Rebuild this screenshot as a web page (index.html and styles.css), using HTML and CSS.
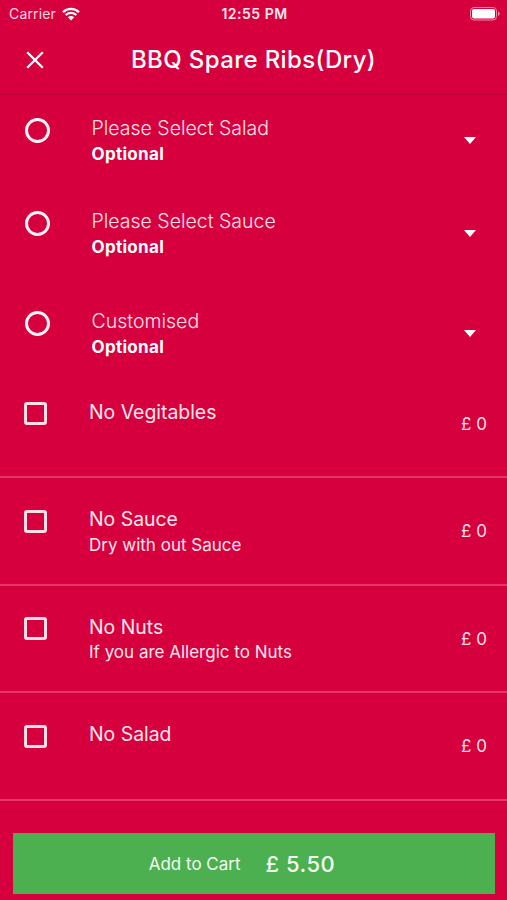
FILE: index.html
```html
<!DOCTYPE html>
<html lang="en">
<head>
  <meta charset="UTF-8">
  <meta name="viewport" content="width=device-width, initial-scale=1.0">
  <title>BBQ Spare Ribs(Dry)</title>
  <link rel="stylesheet" href="styles.css">
</head>
<body>

  <div class="status-bar">
    <div class="carrier">
      <span>Carrier</span>
      <svg class="wifi" viewBox="0 0 18 14">
        <path d="M1 5.2 A11.4 11.4 0 0 1 17 5.2" />
        <path d="M3.7 8 A7.5 7.5 0 0 1 14.3 8" />
        <path class="dot" d="M9 13.6 L5.8 10.3 A4.6 4.6 0 0 1 12.2 10.3 Z" />
      </svg>
    </div>
    <span class="time">12:55 PM</span>
    <div class="battery-wrap">
      <svg class="battery" viewBox="0 0 30 14">
        <rect class="case" x="0.5" y="0.5" width="26" height="12.5" rx="3.5" />
        <rect class="level" x="2" y="2" width="23" height="9.5" rx="2" />
        <path class="tip" d="M28 4.5 Q29.8 5.2 29.8 6.8 Q29.8 8.4 28 9 Z" />
      </svg>
    </div>
  </div>

  <header class="header">
    <svg class="close" viewBox="0 0 18 18">
      <path d="M1.2 1.2 L16.8 16.8 M16.8 1.2 L1.2 16.8" />
    </svg>
    <h1>BBQ Spare Ribs(Dry)</h1>
  </header>

  <main>
    <section class="group">
      <span class="radio"></span>
      <div class="text">
        <p class="group-title">Please Select Salad</p>
        <p class="optional">Optional</p>
      </div>
      <span class="arrow"></span>
    </section>
    <section class="group">
      <span class="radio"></span>
      <div class="text">
        <p class="group-title">Please Select Sauce</p>
        <p class="optional">Optional</p>
      </div>
      <span class="arrow"></span>
    </section>
    <section class="group open">
      <span class="radio"></span>
      <div class="text">
        <p class="group-title">Customised</p>
        <p class="optional">Optional</p>
      </div>
      <span class="arrow"></span>
    </section>

    <ul class="items">
      <li class="item">
        <span class="checkbox"></span>
        <div class="text">
          <p class="item-title">No Vegitables</p>
        </div>
        <span class="price">£ 0</span>
      </li>
      <li class="item">
        <span class="checkbox"></span>
        <div class="text">
          <p class="item-title">No Sauce</p>
          <p class="item-note">Dry with out Sauce</p>
        </div>
        <span class="price">£ 0</span>
      </li>
      <li class="item">
        <span class="checkbox"></span>
        <div class="text">
          <p class="item-title">No Nuts</p>
          <p class="item-note">If you are Allergic to Nuts</p>
        </div>
        <span class="price">£ 0</span>
      </li>
      <li class="item">
        <span class="checkbox"></span>
        <div class="text">
          <p class="item-title">No Salad</p>
        </div>
        <span class="price">£ 0</span>
      </li>
    </ul>
  </main>

  <button class="cart">
    <span class="cart-label">Add to Cart</span>
    <span class="cart-total">£ 5.50</span>
  </button>

</body>
</html>
```
FILE: styles.css
```css
* {
  box-sizing: border-box;
}
body {
  margin: 0;
  height: 900px;
  overflow: hidden;
  font-family: Inter, Roboto, sans-serif;
  background-color: #d7003f;
  color: #fff;
}
h1, p, ul {
  margin: 0;
  padding: 0;
}

/* status bar */
.status-bar {
  display: grid;
  grid-template-columns: 1fr auto 1fr;
  align-items: center;
  height: 27px;
  padding: 0 7px 0 9px;
  font-size: 14px;
}
.carrier {
  display: flex;
  align-items: center;
  gap: 6px;
  letter-spacing: 0.15px;
  color: #ffd9e3;
}
.wifi {
  width: 18px;
  height: 14px;
  fill: none;
  stroke: #fff;
  stroke-width: 2.3;
}
.wifi .dot {
  fill: #fff;
  stroke: none;
}
.time {
  font-weight: 600;
  letter-spacing: 0.5px;
  color: #ffe6ec;
}
.battery-wrap {
  display: flex;
  justify-content: flex-end;
}
.battery {
  width: 30px;
  height: 14px;
}
.battery .case {
  fill: none;
  stroke: #f08ba6;
}
.battery .level {
  fill: #fff;
}
.battery .tip {
  fill: #f08ba6;
}

/* header */
.header {
  display: grid;
  grid-template-columns: 1fr auto 1fr;
  align-items: center;
  height: 68px;
  padding: 0 26px 2px;
  border-bottom: 1px solid #c2003a;
}
.close {
  width: 18px;
  height: 18px;
  fill: none;
  stroke: #fff;
  stroke-width: 2.3;
}
.header h1 {
  font-size: 24px;
  font-weight: 500;
  letter-spacing: 0.38px;
}

/* option groups */
.group {
  display: flex;
  align-items: flex-start;
  height: 93px;
  padding: 21px 31px 0 25px;
}
.group.open {
  height: 89.5px;
  padding-top: 28px;
}
.radio {
  width: 25px;
  height: 25px;
  margin: 2px 41.5px 0 0;
  border: 3px solid #fff5f8;
  border-radius: 50%;
}
.text {
  flex: 1;
}
.text p {
  line-height: 25px;
}
.group-title {
  font-size: 19.5px;
  font-weight: 300;
  color: #ffe0e8;
}
.optional {
  font-size: 17px;
  font-weight: 700;
  letter-spacing: 0.3px;
}
.group .optional {
  padding-top: 0.5px;
}
.arrow {
  margin-top: 21px;
  border: 6px solid transparent;
  border-top: 7px solid #fff;
  border-bottom: 0;
}

/* extras */
.items {
  list-style: none;
}
.item {
  display: flex;
  align-items: flex-start;
  height: 107.5px;
  padding: 29px 20px 0 24px;
  border-bottom: 2px solid #e3366a;
}
.checkbox {
  width: 23px;
  height: 23px;
  margin: 2.5px 42px 0 0;
  border: 3px solid #ffdfe7;
  border-radius: 3px;
}
.item-title {
  font-size: 19.4px;
  color: #ffe6ec;
}
.item-note {
  padding-top: 0.5px;
  font-size: 17px;
  color: #ffe6ec;
}
.price {
  margin-top: 12px;
  font-size: 17px;
  line-height: 25px;
  color: #ffdfe7;
}

/* cart button */
.cart {
  display: flex;
  justify-content: center;
  align-items: center;
  gap: 25px;
  width: 482px;
  height: 61px;
  margin: 32.5px 0 0 13px;
  padding: 0 24px 0 0;
  border: 0;
  background-color: #4caf50;
  color: #f2fff2;
  font-family: inherit;
}
.cart-label {
  font-size: 17px;
}
.cart-total {
  font-size: 22px;
  font-weight: 500;
  letter-spacing: 0.5px;
}
```
